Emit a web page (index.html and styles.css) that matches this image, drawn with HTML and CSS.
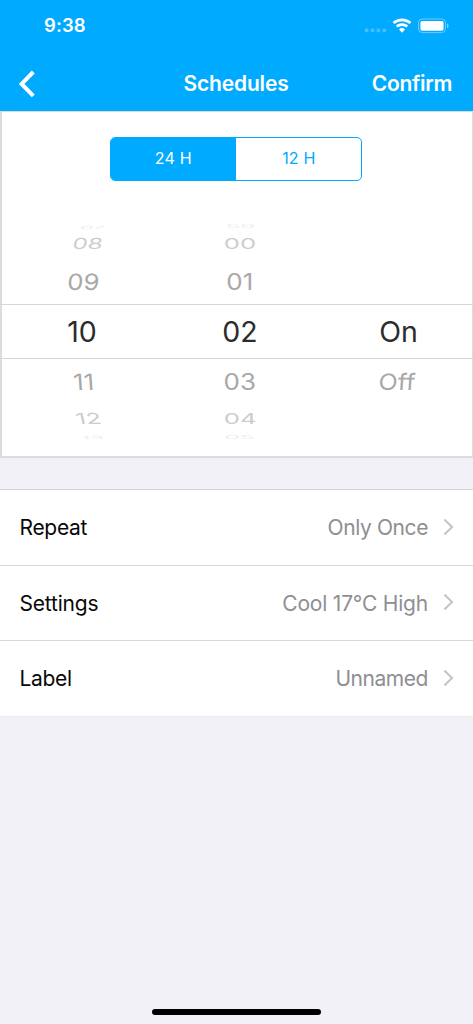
FILE: index.html
```html
<!DOCTYPE html>
<html lang="en">
<head>
<meta charset="utf-8">
<title>Schedules</title>
<link rel="stylesheet" href="styles.css">
</head>
<body>
<header class="header">
  <div class="status">
    <span class="time">9:38</span>
    <svg class="status-icons" width="86" height="18" viewBox="0 0 86 18">
      <g fill="#fff" fill-opacity=".25">
        <rect x="1.8" y="11.5" width="3.7" height="3.7" rx="1"/><rect x="7.7" y="11.5" width="3.7" height="3.7" rx="1"/><rect x="13.6" y="11.5" width="3.7" height="3.7" rx="1"/><rect x="19.5" y="11.5" width="3.7" height="3.7" rx="1"/>
      </g>
      <g fill="none" stroke="#fff" stroke-width="2.7">
        <path d="M30.5 6.1a12.7 12.7 0 0 1 17 0"/>
        <path d="M33.7 9.6a7.9 7.9 0 0 1 10.6 0"/>
      </g>
      <path d="M36 12.5a4.4 4.4 0 0 1 6 0L39 15.7z" fill="#fff"/>
      <rect x="55.5" y="2" width="27" height="13.6" rx="3.8" fill="none" stroke="#fff" stroke-opacity=".42"/>
      <rect x="57.4" y="4" width="23.2" height="9.7" rx="2" fill="#fff"/>
      <path d="M84 6.3c2 .8 2 4.2 0 5z" fill="#fff" fill-opacity=".5"/>
    </svg>
  </div>
  <nav class="nav">
    <svg class="back" width="22" height="30" viewBox="0 0 22 30"><path d="M17.3 3 5.6 14.9 17.3 26.8" fill="none" stroke="#fff" stroke-width="4"/></svg>
    <h1 class="title">Schedules</h1>
    <span class="confirm">Confirm</span>
  </nav>
</header>
<section class="picker">
  <div class="segments">
    <span class="segment selected">24 H</span>
    <span class="segment">12 H</span>
  </div>
  <div class="wheels">
    <div class="wheel hours">
      <span class="far"><b>07</b></span><span class="mid"><b>08</b></span><span class="near"><b>09</b></span>
      <span class="current"><b>10</b></span>
      <span class="near down"><b>11</b></span><span class="mid down"><b>12</b></span><span class="far down"><b>13</b></span>
    </div>
    <div class="wheel minutes">
      <span class="far"><b>59</b></span><span class="mid"><b>00</b></span><span class="near"><b>01</b></span>
      <span class="current"><b>02</b></span>
      <span class="near down"><b>03</b></span><span class="mid down"><b>04</b></span><span class="far down"><b>05</b></span>
    </div>
    <div class="wheel power">
      <span></span><span></span><span></span>
      <span class="current"><b>On</b></span>
      <span class="near down"><b>Off</b></span><span></span><span></span>
    </div>
    <div class="selection"></div>
  </div>
</section>
<main class="list">
  <div class="row"><span class="label">Repeat</span><span class="value once">Only Once</span><svg class="chevron" width="11" height="18" viewBox="0 0 11 18"><path d="M1.4 1.6 9 9 1.4 16.4"/></svg></div>
  <div class="row"><span class="label settings">Settings</span><span class="value mode">Cool 17°C High</span><svg class="chevron" width="11" height="18" viewBox="0 0 11 18"><path d="M1.4 1.6 9 9 1.4 16.4"/></svg></div>
  <div class="row"><span class="label">Label</span><span class="value name">Unnamed</span><svg class="chevron" width="11" height="18" viewBox="0 0 11 18"><path d="M1.4 1.6 9 9 1.4 16.4"/></svg></div>
</main>
<footer class="home"><div class="home-bar"></div></footer>
</body>
</html>
```
FILE: styles.css
```css
* { box-sizing: border-box; }
body {
  margin: 0;
  width: 473px;
  height: 1024px;
  display: flex;
  flex-direction: column;
  overflow: hidden;
  background: #f2f1f7;
  font-family: Inter, "Liberation Sans", sans-serif;
}
.header { height: 111px; background: #00aaff; color: #fff; }
.status {
  height: 56px;
  padding: 17px 24px 0 44px;
  display: flex;
  justify-content: space-between;
}
.time { font-size: 18.5px; line-height: 17px; font-weight: 600; letter-spacing: 0.1px; }
.nav {
  height: 55px;
  padding: 0 21px 0 16px;
  display: grid;
  grid-template-columns: 124px 1fr 120px;
  align-items: center;
}
.title { margin: 0; font-size: 21px; font-weight: 600; letter-spacing: -0.15px; text-align: center; }
.confirm { font-size: 21px; font-weight: 600; letter-spacing: -0.3px; text-align: right; }
.picker {
  height: 347px;
  border: solid #dcdcdc;
  border-width: 1px 1px 2px 2px;
  background: #fff;
  padding-top: 25px;
}
.segments {
  width: 252px;
  height: 44px;
  margin: 0 0 0 108.4px;
  display: flex;
  border: 1px solid #00aaff;
  border-radius: 5px;
  overflow: hidden;
}
.segment {
  width: 50%;
  display: flex;
  align-items: center;
  justify-content: center;
  padding-bottom: 2px;
  font-size: 16px;
  letter-spacing: 0.2px;
  color: #00aaff;
}
.segment.selected { padding-right: 1px; background: #00aaff; color: #fff; }
.wheels {
  position: relative;
  margin: 41px -1px 0 -2px;
  padding-left: 3px;
  display: grid;
  grid-template-columns: 158px 158px 159px;
}
.wheel {
  display: grid;
  grid-template-rows: 9px 26px 50px 50px 49px 26px 9px;
}
.wheel span { display: flex; align-items: center; justify-content: center; overflow: visible; }
.wheel b { font-size: 28.5px; line-height: 34px; font-weight: 400; color: #2c2c2c; }
.wheel .near b { color: #a8a8a8; transform: scale(.91, .79); }
.wheel .mid b { color: #cdcdcd; transform: scale(.9, .53); }
.wheel .far { overflow: hidden; }
.wheel .far b { color: #ededed; transform: scale(.86, .15); }
.hours .near b { transform: translateX(1.5px) skewX(-4deg) scale(.9, .79); }
.hours .near.down b { transform: translateX(2px) skewX(4deg) scale(.9, .79); }
.hours .mid b { transform: translateX(6px) skewX(-12deg) scale(.85, .53); }
.hours .mid.down b { transform: translateX(6px) skewX(12deg) scale(.88, .53); }
.hours .far b { transform: translateX(11px) skewX(-24deg) scale(.78, .15); }
.hours .far.down b { transform: translateX(11px) skewX(24deg) scale(.8, .15); }
.power .near.down b { transform: translateX(-2px) skewX(-4deg) scale(.88, .79); }
.selection {
  position: absolute;
  left: 0;
  right: 0;
  top: 82px;
  height: 55px;
  border: 1px solid #d6d6d6;
  border-width: 1px 0;
}
.list { margin-top: 31px; border-top: 1px solid #d3d2d8; background: #fff; }
.row {
  height: 75.5px;
  padding: 1px 19px 0 19.5px;
  display: flex;
  align-items: center;
  border-bottom: 1px solid #d9d8de;
}
.row:last-child { border-color: #eaeaed; }
.label { font-size: 21px; letter-spacing: -0.3px; color: #080808; }
.settings { letter-spacing: -0.2px; }
.value { margin-left: auto; font-size: 21px; letter-spacing: -0.2px; color: #8e8e93; }
.once { letter-spacing: -0.4px; }
.name { letter-spacing: -0.45px; }
.chevron { margin: -2px 0 0 15px; fill: none; stroke: #c5c5ca; stroke-width: 2.1; }
.home { margin-top: auto; padding-bottom: 9px; display: flex; justify-content: center; }
.home-bar { width: 169px; height: 6px; border-radius: 3px; background: #000; }
```
